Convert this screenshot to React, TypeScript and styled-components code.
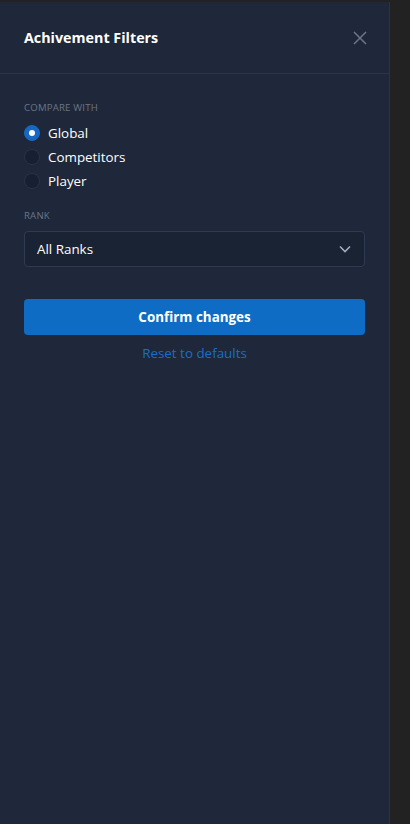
import React, { useState } from 'react';
import styled, { createGlobalStyle } from 'styled-components';

const GlobalStyle = createGlobalStyle`
  html, body {
    margin: 0;
    padding: 0;
    background: #222222;
    font-family: 'Open Sans', 'Noto Sans', sans-serif;
  }
  * {
    box-sizing: border-box;
  }
`;

const Screen = styled.div`
  display: flex;
  height: 824px;
  padding-top: 2px;
  background: #222222;
`;

const Drawer = styled.aside`
  width: 390px;
  height: 100%;
  background: #1e283a;
  border-right: 1px solid #2a3344;
  display: flex;
  flex-direction: column;
`;

const Header = styled.div`
  display: flex;
  align-items: center;
  justify-content: space-between;
  height: 72px;
  padding: 0 22px 0 24px;
  border-bottom: 1px solid #2b3547;

  h2 {
    margin: 0;
    font-size: 14.3px;
    font-weight: 700;
    color: #ffffff;
  }
`;

const CloseButton = styled.button`
  background: none;
  border: 0;
  padding: 0;
  display: flex;
  color: #6c7687;
  cursor: pointer;
`;

const Body = styled.div`
  padding: 27px 24px 0;
  display: flex;
  flex-direction: column;
`;

const Label = styled.div<{ $gap?: number }>`
  font-size: 9.6px;
  letter-spacing: 0.2px;
  text-transform: uppercase;
  color: #6b7585;
  margin-bottom: ${(p) => p.$gap ?? 7}px;
`;

const RadioGroup = styled.div`
  display: flex;
  flex-direction: column;
  gap: 5px;
  margin-bottom: 19px;
`;

const RadioRow = styled.label`
  display: flex;
  align-items: center;
  gap: 8px;
  height: 19px;
  font-size: 13.4px;
  color: #ffffff;
  cursor: pointer;
`;

const RadioDot = styled.span<{ $checked: boolean }>`
  width: 16px;
  height: 16px;
  border-radius: 50%;
  display: flex;
  align-items: center;
  justify-content: center;
  background: ${(p) => (p.$checked ? '#1668c2' : '#172031')};
  border: 1px solid ${(p) => (p.$checked ? '#1668c2' : '#283349')};

  &::after {
    content: '';
    width: 6px;
    height: 6px;
    border-radius: 50%;
    background: #ffffff;
    display: ${(p) => (p.$checked ? 'block' : 'none')};
  }
`;

const Select = styled.div`
  height: 36px;
  display: flex;
  align-items: center;
  justify-content: space-between;
  padding: 0 13px 0 12px;
  background: #1a2334;
  border: 1px solid #2e3b50;
  border-radius: 4px;
  font-size: 13.4px;
  color: #ffffff;
  margin-bottom: 32px;
`;

const ConfirmButton = styled.button`
  height: 36px;
  border: 0;
  border-radius: 4px;
  background: #0f6cc4;
  color: #ffffff;
  font-family: inherit;
  font-size: 13.4px;
  font-weight: 700;
  cursor: pointer;
`;

const ResetLink = styled.button`
  margin-top: 8px;
  background: none;
  border: 0;
  font-family: inherit;
  font-size: 13.4px;
  color: #1b6ccb;
  cursor: pointer;
  align-self: center;
`;

const options = ['Global', 'Competitors', 'Player'];

const App = () => {
  const [compare, setCompare] = useState('Global');
  return (
    <>
      <GlobalStyle />
      <Screen>
        <Drawer>
          <Header>
            <h2>Achivement Filters</h2>
            <CloseButton aria-label="Close">
              <svg width="14" height="14" viewBox="0 0 14 14" fill="none" stroke="currentColor" strokeWidth="1.5">
                <path d="M1 1l12 12M13 1L1 13" />
              </svg>
            </CloseButton>
          </Header>
          <Body>
            <Label $gap={9}>Compare with</Label>
            <RadioGroup>
              {options.map((o) => (
                <RadioRow key={o} onClick={() => setCompare(o)}>
                  <RadioDot $checked={compare === o} />
                  {o}
                </RadioRow>
              ))}
            </RadioGroup>
            <Label $gap={9}>Rank</Label>
            <Select>
              All Ranks
              <svg width="12" height="8" viewBox="0 0 12 8" fill="none" stroke="#a3abb8" strokeWidth="1.6">
                <path d="M1 1.5l5 5 5-5" />
              </svg>
            </Select>
            <ConfirmButton>Confirm changes</ConfirmButton>
            <ResetLink>Reset to defaults</ResetLink>
          </Body>
        </Drawer>
      </Screen>
    </>
  );
};

export default App;
